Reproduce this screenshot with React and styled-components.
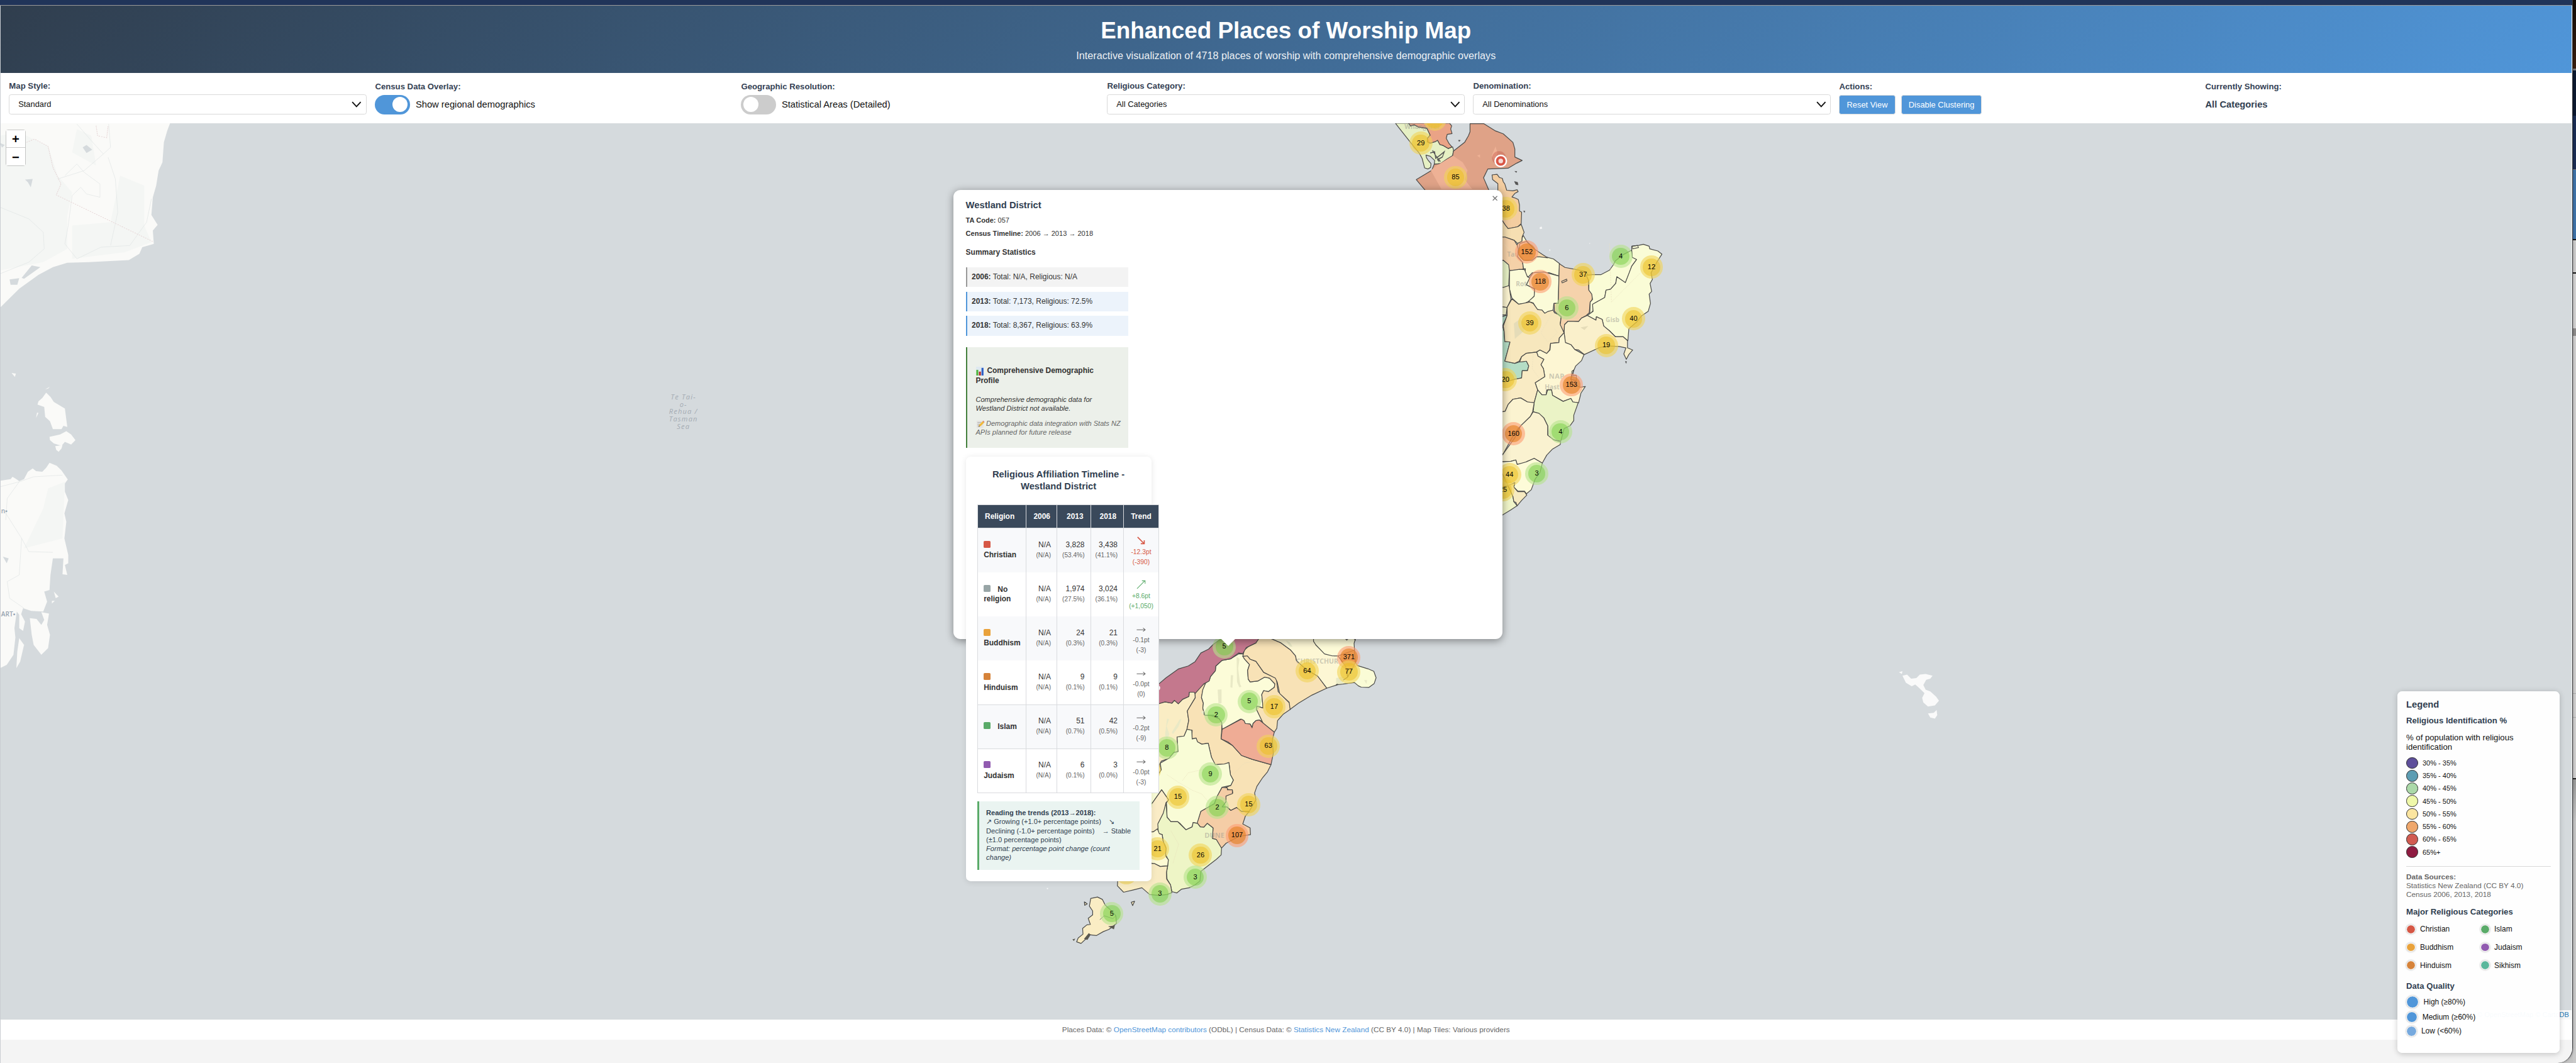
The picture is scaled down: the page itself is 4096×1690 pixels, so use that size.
import React from "react";
import styled, { createGlobalStyle, css } from "styled-components";

const Global = createGlobalStyle`
  html, body { margin: 0; padding: 0; overflow: hidden; background: #f4f4f4; }
  * { box-sizing: border-box; }
`;

const Screen = styled.div`
  zoom: 0.9217;
  width: 4444px;
  height: 1834px;
  display: flex;
  overflow: hidden;
  background: #c4c4c4;
  font-family: "Liberation Sans", Arial, Helvetica, sans-serif;
  color: #333;
`;
const Window = styled.div`
  position: relative;
  width: 4438px;
  height: 1834px;
  display: flex;
  flex-direction: column;
  flex: none;
  overflow: hidden;
  background: #f4f4f4;
  border-right: 2px solid #38393c;
  border-bottom-right-radius: 26px;
  box-shadow: 0 0 4px rgba(0, 0, 0, 0.4);
`;
const TabStrip = styled.div`
  height: 10px;
  flex: none;
  background: #203459;
  border-bottom: 2px solid #9b9a9a;
`;
const Page = styled.div`
  display: flex;
  flex-direction: column;
  flex: 1;
  border-left: 1px solid #c9cdd2;
  border-right: 2px solid #f3f5f6;
`;
const Behind = styled.div`
  width: 6px;
  flex: none;
  display: flex;
  flex-direction: column;
`;
const Slice = styled.div`
  height: ${(p) => p.$h}px;
  flex: none;
  background: ${(p) => p.$c};
`;

const Header = styled.header`
  height: 116px;
  flex: none;
  padding-top: 19px;
  text-align: center;
  background: linear-gradient(135deg, #303e4e 0%, #5096d9 100%);
  color: #fff;
`;
const Title = styled.h1`
  margin: 0 0 7.5px;
  font-size: 40px;
  line-height: 48px;
  font-weight: 700;
`;
const Subtitle = styled.p`
  margin: 0;
  font-size: 17.6px;
  line-height: 22px;
  opacity: 0.9;
`;

const Controls = styled.div`
  height: 87px;
  flex: none;
  display: grid;
  grid-template-columns: repeat(7, 1fr);
  gap: 15px;
  padding: 14px 15px 0 14.5px;
  background: #fff;
`;
const Control = styled.div`
  display: flex;
  flex-direction: column;
  gap: 4.5px;
  padding-top: ${(p) => (p.$drop ? 1 : 0)}px;
`;
const Label = styled.div`
  font-size: 14.3px;
  line-height: 18px;
  font-weight: 700;
  color: #344154;
`;
const Select = styled.div`
  display: flex;
  align-items: center;
  justify-content: space-between;
  height: 35px;
  padding: 0 7px 0 15px;
  border: 1px solid #d9d9d9;
  border-radius: 4px;
  font-size: 14px;
  color: #111;
`;
const Inline = styled.div`
  display: flex;
  align-items: center;
  gap: 10px;
  height: 34px;
  font-size: 16px;
  color: #111;
  font-weight: ${(p) => (p.$bold ? 700 : 400)};
  ${(p) => p.$bold && css`color: #303e50;`}
`;
const Toggle = styled.div`
  width: 60px;
  height: 34px;
  border-radius: 17px;
  padding: 4px;
  display: flex;
  justify-content: ${(p) => (p.$on ? "flex-end" : "flex-start")};
  background: ${(p) => (p.$on ? "#5096d9" : "#ccc")};
  &::after {
    content: "";
    width: 26px;
    height: 26px;
    border-radius: 50%;
    background: #fff;
  }
`;
const Button = styled.div`
  height: 34px;
  line-height: 32px;
  padding: 0 12px;
  border: 1px solid #dcdcdc;
  border-radius: 4px;
  background: #5096d9;
  color: #fff;
  font-size: 14px;
`;

const MapArea = styled.div`
  position: relative;
  height: 1546px;
  flex: none;
  overflow: hidden;
  background: #d5dadd;
`;
const MapDrawing = styled.svg`
  display: block;
  margin-left: -1px;
  width: 4434px;
  height: 1546px;
`;
const ZoomBox = styled.div`
  position: absolute;
  left: 9px;
  top: 10px;
  width: 34px;
  border: 2px solid rgba(0, 0, 0, 0.2);
  border-radius: 4px;
  background-clip: padding-box;
`;
const ZoomButton = styled.div`
  height: ${(p) => (p.$first ? 31 : 30)}px;
  padding-top: 3.5px;
  border-bottom: ${(p) => (p.$first ? "1px solid #ccc" : "0")};
  background: #fff;
  display: flex;
  align-items: center;
  justify-content: center;
  font-weight: 700;
  font-size: 22px;
  line-height: 26px;
  color: #000;
`;
const tones = {
  s: ["rgba(181,226,140,.6)", "rgba(110,204,57,.45)"],
  m: ["rgba(241,211,87,.6)", "rgba(236,190,30,.5)"],
  l: ["rgba(253,156,115,.6)", "rgba(226,126,30,.6)"],
};
const Cluster = styled.div`
  position: absolute;
  left: ${(p) => p.$x - 21}px;
  top: ${(p) => p.$y - 233}px;
  width: 40px;
  height: 40px;
  padding: 5px;
  border-radius: 50%;
  background: ${(p) => tones[p.$t][0]};
  span {
    display: block;
    height: 30px;
    border-radius: 50%;
    background: ${(p) => tones[p.$t][1]};
    text-align: center;
    font-size: 12px;
    line-height: 30px;
    color: #000;
  }
`;
const Attribution = styled.div`
  position: absolute;
  right: 0;
  bottom: 0;
  height: 17px;
  padding: 0 4px 0 5px;
  background: rgba(255, 255, 255, 0.8);
  font-size: 12px;
  line-height: 17px;
  white-space: nowrap;
  color: #2578b4;
`;

const Popup = styled.div`
  position: absolute;
  left: 1644px;
  top: 115px;
  width: 947px;
  height: 774px;
  padding: 15.5px 21px 0;
  border-radius: 12px;
  background: #fff;
  box-shadow: 0 3px 14px rgba(0, 0, 0, 0.4);
`;
const Tip = styled.svg`
  position: absolute;
  left: 461px;
  top: 773px;
  width: 26px;
  height: 13px;
`;
const Close = styled.svg`
  position: absolute;
  right: 8px;
  top: 9px;
  width: 9px;
  height: 9px;
`;
const Body = styled.div`
  width: 280px;
`;
const PopTitle = styled.div`
  font-size: 16px;
  line-height: 20px;
  font-weight: 700;
  color: #303e50;
  margin-bottom: 9px;
`;
const Fact = styled.div`
  font-size: 12px;
  line-height: 16px;
  margin-bottom: 6px;
`;
const Section = styled.div`
  font-size: 13px;
  line-height: 16px;
  font-weight: 700;
  margin: 17.5px 0 17px;
`;
const Years = styled.div`
  display: flex;
  flex-direction: column;
  gap: 8px;
`;
const Year = styled.div`
  height: 34px;
  padding-left: 8px;
  font-size: 13px;
  line-height: 33px;
  border-left: 3px solid ${(p) => (p.$on ? "#5096d9" : "#999")};
  background: ${(p) => (p.$on ? "#ecf3fb" : "#f3f3f3")};
`;
const Profile = styled.div`
  margin-top: 20px;
  height: 174px;
  padding: 32.5px 0 0 15px;
  border-left: 3px solid #43803c;
  background: #ecf0ea;
  white-space: nowrap;
`;
const ProfileTitle = styled.div`
  font-size: 13px;
  line-height: 17px;
  font-weight: 700;
  margin-bottom: 17.3px;
`;
const ProfileText = styled.div`
  font-size: 12px;
  line-height: 15px;
  font-style: italic;
  margin-bottom: 10.7px;
  color: ${(p) => (p.$dim ? "#666" : "#333")};
`;
const Emoji = styled.svg`
  display: inline-block;
  vertical-align: -3px;
  width: 16px;
  height: 16px;
  margin: -2px ${(p) => p.$gap}px -2px 0;
`;
const Timeline = styled.div`
  margin-top: 15px;
  width: 320px;
  height: 732px;
  padding: 20.5px 20px 20px;
  border-radius: 8px;
  background: #fff;
  box-shadow: 0 2px 10px rgba(0, 0, 0, 0.1);
`;
const TimelineTitle = styled.div`
  font-size: 16px;
  line-height: 21px;
  font-weight: 700;
  text-align: center;
  color: #303e50;
  margin-bottom: 19.5px;
`;
const Table = styled.div`
  display: grid;
  grid-template-columns: 83px 52px 57px 56px 59.4px;
  gap: 1px;
  width: 313.4px;
  padding: 1px;
  background: #d9dbde;
`;
const Head = styled.div`
  height: 40px;
  padding: 0 12px;
  line-height: 41px;
  font-size: 13px;
  font-weight: 700;
  color: #fff;
  background: #3a495b;
  text-align: ${(p) => p.$align};
  ${(p) => p.$align === "center" && css`padding: 0;`}
`;
const Cell = styled.div`
  height: 75px;
  background: ${(p) => (p.$alt ? "#f8f9fb" : "#fff")};
  text-align: right;
  padding: 20.5px 10px 0 0;
  font-size: 13px;
  line-height: 17px;
`;
const Small = styled.div`
  font-size: 11px;
  line-height: 17px;
  color: #666;
`;
const Faith = styled.div`
  height: 75px;
  background: ${(p) => (p.$alt ? "#f8f9fb" : "#fff")};
  display: flex;
  flex-direction: column;
  justify-content: center;
  padding: 1px 0 0 10px;
  font-size: 13px;
  line-height: 16.5px;
  font-weight: 700;
`;
const Swatch = styled.span`
  display: inline-block;
  width: 12px;
  height: 12px;
  margin-right: 12px;
  border-radius: 2px;
  background: ${(p) => p.$c};
`;
const Trend = styled.div`
  height: 75px;
  background: ${(p) => (p.$alt ? "#f8f9fb" : "#fff")};
  display: flex;
  flex-direction: column;
  align-items: center;
  padding-top: 12.5px;
  font-size: 11.2px;
  line-height: 17px;
  color: ${(p) => p.$c};
`;
const Arrow = styled.svg`
  width: 16px;
  height: 16px;
  margin-bottom: 3.5px;
  flex: none;
  fill: none;
  stroke: currentColor;
  stroke-width: ${(p) => p.$w};
`;
const Note = styled.div`
  margin-top: 14.5px;
  height: 118px;
  padding: 12px 0 0 12px;
  border-left: 4px solid #5aab69;
  background: #eaf4f1;
  font-size: 12px;
  line-height: 15.5px;
  color: #303e50;
  white-space: pre;
`;

const Legend = styled.aside`
  position: absolute;
  left: 4136px;
  top: 1192px;
  width: 280px;
  height: 624px;
  padding: 15px;
  border-radius: 8px;
  background: rgba(255, 255, 255, 0.97);
  box-shadow: 0 2px 10px rgba(0, 0, 0, 0.2);
  color: #111;
`;
const LegendTitle = styled.div`
  font-size: ${(p) => p.$size || 14.3}px;
  line-height: 18px;
  height: 18px;
  font-weight: 700;
  color: #303e50;
  margin-top: ${(p) => p.$mt || 0}px;
`;
const LegendNote = styled.div`
  margin-top: 13px;
  font-size: 14.3px;
  line-height: 16px;
`;
const Scale = styled.div`
  display: flex;
  flex-direction: column;
  gap: 4px;
  margin-top: 9.6px;
  padding-bottom: 15px;
  border-bottom: 1px solid #d8d8d8;
`;
const ScaleRow = styled.div`
  display: flex;
  align-items: center;
  gap: 8px;
  height: 18px;
  font-size: 12px;
  &::before {
    content: "";
    width: 18px;
    height: 18px;
    border-radius: 50%;
    border: 1px solid #333;
    background: ${(p) => p.$c};
  }
`;
const Sources = styled.div`
  margin-top: 9.8px;
  font-size: 12.8px;
  line-height: 15.4px;
  color: #666;
`;
const Faiths = styled.div`
  display: grid;
  grid-template-columns: 128px 1fr;
  grid-auto-rows: 31.1px;
  margin-top: 4.6px;
`;
const Item = styled.div`
  display: flex;
  align-items: center;
  gap: 8px;
  font-size: 13px;
  height: ${(p) => p.$h}px;
  margin-top: ${(p) => p.$mt || 0}px;
`;
const Dot = styled.span`
  width: ${(p) => p.$d}px;
  height: ${(p) => p.$d}px;
  border-radius: 50%;
  border: 2px solid #fff;
  background: ${(p) => p.$c};
  background-clip: padding-box;
  box-shadow: 0 0 3px rgba(0, 0, 0, 0.35);
`;

const Footer = styled.footer`
  height: 35px;
  flex: none;
  background: #fff;
  text-align: center;
  font-size: 12.8px;
  line-height: 35px;
  color: #666;
  b {
    font-weight: 400;
    color: #5096d9;
  }
`;

const clusters = [
  [2475, 206, "", "m"], [2451, 247, 29, "m"], [2511, 306, 85, "m"], [2598, 360, 38, "m"],
  [2634, 435, 152, "l"], [2657, 486, 118, "l"], [2731, 474, 37, "m"], [2796, 442, 4, "s"],
  [2849, 461, 12, "m"], [2703, 531, 6, "s"], [2639, 557, 39, "m"], [2818, 550, 40, "m"],
  [2771, 596, 19, "m"], [2597, 655, 20, "m"], [2711, 664, 153, "l"], [2611, 748, 160, "l"],
  [2692, 745, 4, "s"], [2593, 845, 25, "m"], [2604, 818.5, 44, "m"], [2651, 817, 3, "s"],
  [2112, 1115.5, 5, "s"], [2327, 1134, 371, "l"], [2327, 1159, 77, "m"], [2255, 1157, 64, "m"],
  [2155, 1210, 5, "s"], [2198, 1219, 17, "m"], [2098, 1233, 2, "s"], [2013, 1290, 8, "s"],
  [2188, 1287, 63, "m"], [2088, 1335, 9, "s"], [2032, 1375, 15, "m"], [2154, 1388, 15, "m"],
  [2100, 1393, 2, "s"], [2134, 1441, 107, "l"], [1997, 1464, 21, "m"], [2071, 1475, 26, "m"],
  [2062, 1513, 3, "s"], [2001, 1542, 3, "s"], [1918, 1576, 5, "s"], [1983, 1328, "", "m"],
  [1968, 1387, "", "s"], [1943, 1505, "", "m"],
];

const north = [
  ["#e6f0c4", "82,28 100,45 165,105 205,140 220,160 233,196 250,200 264,194 266,180 250,166 243,158 240,148 262,152 285,168 283,182 315,180 345,165 378,150 383,130 378,117 355,123 330,112 312,108 300,92 262,103 248,98 247,85 262,73 245,47 200,42 180,34 160,38 150,28"],
  ["#eaa386", "150,28 160,38 180,34 200,42 245,47 262,73 247,85 248,98 262,103 290,97 300,92 312,108 330,112 355,123 375,117 360,105 345,85 350,70 375,67 368,50 373,38 362,28"],
  ["#dfa287", "468,30 540,30 600,57 640,68 690,100 700,125 700,155 738,168 710,178 665,197 560,200 538,233 565,279 575,300 250,300 235,279 215,262 190,240 270,205 283,182 315,180 345,165 378,150 382,133 440,100 460,75 468,60"],
  ["#f3cda0", "582,222 608,220 620,232 635,235 640,248 648,256 658,280 690,282 712,278 717,285 700,292 685,305 705,310 718,315 724,335 724,358 735,362 733,405 715,417 665,424 650,412 636,395 612,360 612,255 585,240"],
  ["#f6dfb2", "733,408 748,438 738,455 737,472 715,480 697,468 650,456 610,456 610,395 636,395 652,412 665,424 715,417"],
  ["#f5d1a8", "610,456 650,456 697,468 712,486 720,500 715,530 740,550 745,575 725,580 672,582 665,560 640,543 610,543"],
  ["#fcfad4", "744,450 760,470 820,515 860,530 900,538 932,556 928,602 880,590 790,590 770,605 750,598 755,575 745,575 740,550 715,530 718,500 712,485 718,478 737,472 738,458"],
  ["#f6d8aa", "760,472 800,500 840,520 870,534 830,530 812,530 790,543 745,543 720,520 725,480"],
  ["#fbfbd8", "672,582 725,577 750,578 765,605 778,610 760,635 800,650 803,675 780,695 750,705 720,708 685,685 672,650"],
  ["#fbfbd8", "780,605 795,590 850,587 928,602 925,705 902,705 898,730 870,738 855,742 840,730 815,728 795,703 770,698 800,678 803,650 760,635"],
  ["#e8f2c6", "610,548 640,543 668,560 672,582 668,640 640,645 610,645"],
  ["#fbf3d0", "610,645 640,645 670,638 680,690 660,720 635,718 610,700"],
  ["#f6f6d0", "610,700 635,718 660,720 655,748 636,748 610,745"],
  ["#b5ddc5", "610,760 655,750 660,752 636,790 645,812 648,848 675,850 662,885 648,922 700,930 725,925 760,922 772,940 765,958 738,958 735,985 700,990 650,1000 610,1000"],
  ["#f7e7bd", "660,720 685,688 720,708 778,700 795,705 818,728 840,730 855,742 872,735 898,730 905,740 940,752 935,780 955,815 930,835 928,852 885,855 880,880 865,893 830,880 810,888 760,892 735,905 722,922 700,930 648,922 662,885 675,850 648,848 645,812 640,790 660,750"],
  ["#f5d2ab", "930,556 960,570 1020,578 1065,585 1080,600 1083,655 1100,670 1100,690 1090,700 1085,740 1070,750 1045,760 1030,773 975,772 957,785 955,815 935,785 940,755 905,735 903,705 925,705"],
  ["#fafcd6", "1070,600 1100,597 1145,597 1190,580 1210,560 1220,545 1265,520 1305,505 1310,530 1330,540 1305,565 1290,595 1272,627 1228,605 1222,630 1195,652 1172,655 1165,683 1105,708 1105,732 1088,745 1090,700 1102,690 1098,670 1083,655 1083,620"],
  ["#fafcd6", "1305,490 1340,487 1365,483 1395,490 1398,500 1440,508 1461,520 1435,550 1405,590 1412,615 1400,630 1408,660 1395,670 1402,705 1390,735 1355,752 1330,775 1290,800 1285,845 1260,830 1220,830 1190,808 1160,790 1152,765 1122,755 1120,768 1075,750 1105,735 1102,708 1165,683 1172,655 1195,652 1222,630 1228,605 1272,627 1305,565 1330,540 1308,532 1305,505"],
  ["#faf0cb", "1075,750 1120,768 1122,755 1152,765 1160,790 1190,808 1220,830 1260,830 1283,845 1283,872 1310,880 1290,897 1277,915 1264,895 1275,872 1240,867 1190,865 1140,870 1060,897 1030,880 1010,878 990,860 960,852 955,815 957,785 975,772 1030,773 1045,760"],
  ["#fdf6d3", "955,815 962,852 990,860 1010,878 1058,897 1045,920 1015,940 1000,965 990,990 1000,1010 1040,1020 1065,1017 1042,1042 1030,1078 1000,1075 990,1062 950,1073 895,1050 890,1030 865,1030 862,1048 840,1048 818,1030 805,1003 855,980 848,950 835,935 850,915 820,903 813,888 830,880 865,893 882,880 885,855 928,852 930,835"],
  ["#f9ebc4", "813,888 820,903 850,915 835,935 848,950 855,980 805,1003 818,1030 800,1078 765,1075 730,1060 690,1065 665,1085 650,1110 610,1115 610,1000 650,1000 700,990 735,985 738,958 765,958 772,940 760,922 725,925 735,905 760,892"],
  ["#ebf3c6", "818,1030 840,1048 862,1048 870,1030 890,1030 895,1050 950,1073 990,1062 1000,1075 1028,1078 1005,1125 1005,1145 985,1165 955,1175 938,1222 900,1217 872,1205 870,1165 850,1135 825,1120 795,1112 800,1078"],
  ["#fbf3d0", "610,1115 650,1110 665,1085 690,1065 730,1060 765,1075 800,1078 792,1112 780,1130 730,1165 700,1190 640,1270 610,1270"],
  ["#faf2d0", "795,1112 825,1118 850,1135 870,1165 870,1200 900,1217 937,1225 935,1235 895,1252 865,1275 842,1305 800,1287 765,1298 740,1308 712,1310 705,1293 680,1298 640,1300 610,1298 640,1270 700,1210 730,1165 780,1130"],
  ["#fdfbd8", "610,1298 640,1300 680,1298 705,1293 712,1310 760,1300 800,1287 842,1305 830,1340 805,1365 785,1405 760,1420 750,1410 715,1410 695,1395 700,1378 665,1390 636,1345 610,1330"],
  ["#f0f5c8", "610,1400 665,1390 690,1430 695,1450 712,1465 680,1480 636,1500 610,1505"],
  ["#f6eac0", "665,1390 700,1378 695,1395 715,1412 750,1412 762,1425 735,1445 712,1465 705,1452 695,1450 690,1430"],
];

const south = [
  ["#faedc4", "40,403 90,393 125,400 138,385 158,403 180,380 213,365 215,343 245,343 246,372 235,390 205,440 212,490 203,535 188,570 152,575 157,650 135,655 110,685 70,700 60,720 70,745 40,790"],
  ["#f8e2b6", "245,350 275,310 300,295 285,335 278,370 288,400 285,425 293,460 330,465 370,480 385,500 383,535 380,585 440,620 485,670 540,690 638,718 620,755 595,785 565,830 553,865 560,900 525,960 485,960 460,940 430,955 410,937 385,937 405,910 405,880 440,865 438,850 412,845 405,835 430,825 443,798 428,770 420,707 400,715 345,718 330,680 313,607 280,612 255,600 250,580 228,585 230,540 203,535 212,490 205,440 235,390 246,372"],
  ["#fcfcd8", "300,295 318,282 325,262 350,232 352,208 385,178 430,170 470,145 492,145 500,170 527,200 517,230 520,275 530,290 570,285 605,265 630,270 658,300 655,318 625,340 600,335 590,355 597,425 565,415 562,430 595,495 578,487 560,490 545,505 542,525 530,508 505,505 498,490 480,482 385,535 383,500 370,480 340,462 295,462 285,425 288,400 278,370 285,330"],
  ["#f8e2b6", "492,157 515,153 530,172 560,183 600,240 665,270 675,340 735,400 738,432 700,458 672,490 668,530 655,550 600,510 562,430 565,415 597,425 590,355 600,335 625,340 655,318 658,300 630,270 605,265 570,285 530,290 520,275 517,230 527,200 500,170"],
  ["#f8e2b6", "575,40 640,66 690,88 740,125 765,155 770,180 820,225 880,260 927,322 850,358 780,400 737,432 732,395 683,350 670,290 660,270 600,240 560,183 530,172 515,155 492,157 500,125 520,108 560,88"],
  ["#c4788d", "40,310 60,298 95,268 160,222 210,207 245,185 275,140 315,120 340,95 380,66 400,40 590,40 575,66 560,88 510,112 492,143 470,140 430,170 385,178 352,208 350,232 325,262 318,285 290,300 245,350 240,343 215,343 213,365 180,380 158,403 138,385 125,400 90,393 57,403 40,403"],
  ["#fdf7d4", "640,66 640,40 858,40 858,66 870,98 920,145 965,155 985,155 1025,210 1035,265 980,305 927,322 880,260 820,225 770,180 765,155 740,125 690,88"],
  ["#fdfbd8", "858,40 1080,40 1075,66 1068,90 1070,125 1040,145 985,155 955,155 915,145 870,98 858,80"],
  ["#f8e2b6", "985,155 1070,125 1075,190 1035,265 1025,210"],
  ["#fafcd6", "1035,265 975,305 1070,293 1090,310 1105,317 1145,318 1172,298 1182,268 1170,235 1140,222 1085,205 1075,190"],
  ["#efac95", "385,535 485,482 498,490 505,505 530,508 540,527 545,505 560,490 578,487 600,505 655,550 645,590 650,660 638,718 540,690 485,670 440,620 415,600 380,585"],
  ["#f9fcd6", "203,535 228,540 230,585 250,580 258,600 280,612 313,607 330,680 350,718 395,715 420,707 428,770 443,798 430,825 385,835 358,885 345,920 275,960 258,1022 235,1017 230,1040 198,1055 165,1020 155,1013 120,1013 100,990 97,915 108,900 72,848 25,915 0,960 0,800 40,790 70,745 65,710 110,685 135,655 157,650 152,575 188,570"],
  ["#faecc6", "72,848 108,900 95,915 85,965 55,1020 55,1050 30,1065 0,1065 0,940 25,915"],
  ["#f5cda6", "385,835 412,838 412,848 438,848 438,868 405,880 405,910 385,937 410,937 430,955 460,940 485,960 525,960 505,985 492,1025 530,1045 532,1080 470,1090 405,1125 382,1150 360,1128 352,1105 335,1100 338,1045 308,1022 290,1042 272,1040 256,1020 275,960 345,920 360,880"],
  ["#eef5c6", "95,915 100,990 120,1013 155,1013 198,1055 230,1040 235,1017 258,1022 272,1040 290,1042 308,1022 338,1045 335,1100 355,1105 382,1150 380,1185 355,1208 320,1235 275,1270 270,1320 245,1340 215,1355 175,1362 150,1382 125,1375 118,1340 100,1310 97,1275 103,1245 105,1210 92,1180 75,1080 55,1075 52,1025 80,970"],
  ["#fdfad4", "0,1068 30,1065 50,1050 60,1075 75,1080 78,1110 95,1150 92,1190 107,1210 103,1242 65,1245 35,1230 0,1225"],
  ["#f8ebc2", "-155,1225 -155,1310 -157,1345 -125,1378 -78,1367 -30,1355 10,1390 60,1395 100,1390 125,1380 118,1340 98,1310 97,1275 103,1242 65,1245 35,1230"],
  ["#faedc4", "-295,1410 -260,1403 -235,1415 -220,1445 -190,1472 -165,1500 -162,1540 -200,1570 -230,1582 -265,1602 -300,1598 -315,1615 -345,1643 -368,1635 -360,1615 -335,1595 -337,1565 -315,1547 -297,1545 -308,1513 -285,1495 -285,1475 -302,1450"],
  ["#faedc4", "-328,1428 -313,1438 -326,1446"],
  ["#faedc4", "-85,1430 -68,1425 -78,1447"],
];

const australia = [
  "0,22 354,22 348,45 341,80 338,140 330,165 325,210 318,245 315,298 328,328 318,345 320,385 296,395 290,415 268,434 185,440 140,442 110,455 80,478 40,520 0,577",
  "96,832 105,845 112,860 135,880 140,935 132,932 128,942 110,942 104,918 94,905 92,875 78,868 80,858 88,848",
  "75,908 80,893 77,892",
  "103,965 125,958 138,948 148,958 157,975 148,988 135,980 128,992 112,985 104,975",
  "115,993 130,990 128,1000 122,1010 117,1004",
  "24,773 33,775 31,785",
  "94,822 104,814 100,820",
  "0,1097 22,1092 26,1085 32,1090 40,1098 50,1092 58,1070 68,1060 75,1068 88,1070 96,1058 103,1043 118,1052 128,1066 141,1093 135,1105 135,1130 142,1155 134,1195 138,1220 134,1270 142,1320 142,1345 135,1350 140,1380 130,1378 132,1330 110,1330 105,1380 103,1425 92,1430 98,1460 90,1490 65,1488 48,1480 44,1498 52,1520 48,1548 40,1540 40,1500 35,1490 30,1540 32,1568 28,1620 14,1650 0,1660",
  "86,1492 102,1496 98,1530 104,1560 100,1600 86,1620 70,1590 66,1560 62,1510 76,1512 86,1530 92,1515",
  "40,1570 50,1590 42,1640 34,1660 36,1610",
  "112,1430 122,1445 116,1450",
  "108,1458 114,1458 108,1466",
];

const Shapes = ({ list }) =>
  list.map(([fill, points], i) => (
    <polygon key={i} points={points} fill={fill} stroke="#4a4a48" strokeWidth="1.3" strokeLinejoin="round" vectorEffect="non-scaling-stroke" />
  ));

const NewZealand = () => (
  <MapDrawing viewBox="0 213 4434 1546">
    <g transform="translate(0 200) scale(.82908 .57398)">
      {australia.map((p, i) => <polygon key={i} points={p} fill="#fafaf8" />)}
      <path d="M0,60 L40,50 100,90 120,180 150,230 140,300 140,400 90,440 0,465Z M150,110 L200,150 190,60 160,40Z M250,180 L300,210 300,330 315,380 260,410 150,430 150,330 230,320Z M100,1120 L135,1100 130,1270 50,1300 90,1180Z" fill="#f4f6f4" />
      <g fill="none" stroke="#dfe3e3" strokeWidth="1" vectorEffect="non-scaling-stroke">
        <path d="M160,25 L190,75 215,115 230,95 226,25 M215,115 L175,165 120,190 M225,125 L240,190 245,290 230,390 M0,275 L60,310 90,350 92,400 60,440 0,475 M150,240 L142,330 135,385 160,430 210,395 270,390 305,320 315,250 M135,180 L160,145 175,170 208,205 208,245 180,235 168,215 150,240" />
        <path d="M0,1115 L40,1100 70,1085 130,1080 M10,1190 L45,1270 60,1310 110,1312 M45,1270 L40,1380 15,1400 20,1450 50,1480 M40,1100 L15,1150 12,1215" />
      </g>
      <path d="M55,80 L72,70 100,92 110,155 127,205 117,238 318,378 M200,30 L203,60 222,66 225,30" fill="none" stroke="#e3cfd0" strokeWidth="1.4" strokeDasharray="3 2.4" />
      <path d="M172,95 L180,88 192,102 180,112Z M52,192 L68,190 64,215 58,200Z M20,492 L40,488 36,508 22,508Z M66,450 L84,455 50,490 45,487Z M6,1325 L18,1330 14,1345Z M0,82 L10,88 4,96Z" fill="#d5dadd" />
    </g>
    <g transform="translate(2380 200) scale(.33333 .45918)">
      <Shapes list={north} />
      <path d="M265,205 L300,185 380,150 430,175 455,205 440,240 480,276 320,276Z M580,150 L600,115 610,140 595,170Z M505,150 L520,145 520,158Z" fill="#eeb195" />
      <path d="M262,140 L285,135 290,160 310,150 335,135 325,155 300,165 308,172 M274,130 L290,150 315,172" fill="none" stroke="#555" strokeWidth="4" />
      <path d="M695,780 L725,765 760,780 745,810 700,838Z M1040,795 L1080,790 1060,805Z" fill="#e5dcb8" />
      <path d="M942,622 L968,614 970,620 945,628Z M990,990 L995,960 1005,955 1000,975 1018,975 1018,995Z M1308,490 L1335,487 1340,495 1310,500Z" fill="none" stroke="#4a4a48" strokeWidth="3" />
      <path d="M408,92 L418,92 412,97Z M700,209 L710,209 708,213Z M698,247 L714,250 717,260 705,258Z M745,358 L752,358 750,363Z M1272,923 L1278,923 1276,930Z" fill="#555" stroke="#555" strokeWidth="2" />
      <path d="M828,420 L838,416 842,424 830,426Z M876,503 L884,502 882,509Z M1085,478 L1091,479 1087,482Z" fill="#f7f8f8" />
      <path d="M905,800 L920,815 870,850 835,815 890,745 M795,895 L790,950 830,990 825,1025 M640,480 L700,520 M1190,480 L1200,700 1350,590" fill="none" stroke="#e9dfbd" strokeWidth="2" strokeDasharray="5 4" />
    </g>
    <g transform="translate(1980 1080) scale(.33333)">
      <Shapes list={south} />
      <g fill="#e9e9c6">
        <path d="M460,160 L475,170 468,220 478,300 485,315 474,318 462,290Z M362,330 L382,328 382,400 366,402Z M430,255 L442,255 438,320 428,318Z M275,445 L290,440 290,460Z" />
        <path d="M100,480 L110,482 98,520 112,560 95,600 90,560Z M165,485 L175,480 160,520 130,560 125,550Z" />
        <path d="M715,75 L735,85 750,108 735,106Z M975,270 L1015,262 1010,300 975,300Z M1120,280 L1135,280 1132,300Z" />
      </g>
      <path d="M440,770 L500,710 560,700 M100,770 L160,810 230,850 280,870 330,930 M180,800 L210,760 300,740 M120,1060 L160,1130 130,1230 M230,1180 L290,1230" fill="none" stroke="#e6dcb8" strokeWidth="2" strokeDasharray="5 3" />
      <path d="M1020,66 L1030,76 1040,66Z M1065,66 L1075,78 1078,66Z M-390,1622 L-375,1618 -382,1630Z M-384,1594 L-380,1583Z M-330,1620 L-305,1590 -295,1598 -312,1625Z M-205,1555 L-170,1550 -175,1570Z" fill="#5a5850" />
      <path d="M-248,1520 L-225,1500 -180,1515 -165,1500" fill="none" stroke="#666" strokeWidth="3" />
    </g>
    <circle cx="1997" cy="1187" r="4.5" fill="#fff" />
    <g fill="#fafafa">
      <path d="M3282,1166 L3290,1164 3297,1171 3306,1170 3312,1164 3322,1163 3334,1166 3330,1171 3323,1173 3318,1182 3322,1190 3330,1193 3340,1202 3345,1209 3338,1217 3326,1219 3318,1212 3316,1204 3320,1196 3312,1188 3304,1181 3298,1184 3288,1178Z" />
      <path d="M3326,1231 L3336,1230 3341,1225 3342,1234 3338,1240 3330,1238Z M3276,1160 L3282,1158 3281,1163Z M1806,1532 h2 v2 h-2Z" />
    </g>
    <g fontFamily="'Open Sans', 'Noto Sans', sans-serif" fill="#9a9a90" fillOpacity=".5" fontWeight="700" fontSize="12">
      <text x="2423" y="222.5" fontSize="11">Whangarei</text>
      <text x="2600" y="443" fontSize="11">Tau</text>
      <text x="2615" y="494.5" fontSize="11">Rot</text>
      <text x="2770" y="556" fontSize="11">Gisb</text>
      <text x="2672" y="654" letterSpacing=".5">NAP</text>
      <text x="2665" y="672" fontSize="11">Hast</text>
      <text x="2236" y="1145" fontSize="11.5">CHRISTCHUR</text>
      <text x="2078" y="1445">DUNE</text>
    </g>
    <g fontFamily="'Open Sans', 'Noto Sans', sans-serif" fill="#98a4b0" fontSize="11" fontWeight="600">
      <text x="2" y="886">n▪</text>
      <text x="2" y="1064">ART▪</text>
    </g>
    <g fontFamily="'Open Sans', 'Noto Sans', sans-serif" fontStyle="italic" fill="#a4abb3" fontSize="12" textAnchor="middle" letterSpacing="1.3">
      <text x="1179" y="689">Te Tai-</text>
      <text x="1179" y="702">o-</text>
      <text x="1179" y="714">Rehua /</text>
      <text x="1179" y="727">Tasman</text>
      <text x="1179" y="740">Sea</text>
    </g>
    <circle cx="2586" cy="273" r="12" fill="rgba(190,60,50,.3)" />
    <circle cx="2589" cy="278" r="11" fill="#fff" />
    <circle cx="2589" cy="278" r="8.3" fill="#d95545" />
    <circle cx="2589" cy="278" r="4" fill="#f6dcd8" />
  </MapDrawing>
);

const Dropdown = ({ label, value }) => (
  <Control>
    <Label>{label}</Label>
    <Select>
      {value}
      <svg width="17" height="11" viewBox="0 0 17 11" fill="none" stroke="#111" strokeWidth="2">
        <path d="M1.2 1.2 L8.5 9.2 L15.8 1.2" />
      </svg>
    </Select>
  </Control>
);

const rows = [
  ["Christian", "#d65745", "3,828", "53.4%", "3,438", "41.1%", "-12.3pt", "(-390)", "down"],
  ["No religion", "#98a5a6", "1,974", "27.5%", "3,024", "36.1%", "+8.6pt", "(+1,050)", "up"],
  ["Buddhism", "#e9a23b", "24", "0.3%", "21", "0.3%", "-0.1pt", "(-3)", "flat"],
  ["Hinduism", "#d6833a", "9", "0.1%", "9", "0.1%", "-0.0pt", "(0)", "flat"],
  ["Islam", "#5aab69", "51", "0.7%", "42", "0.5%", "-0.2pt", "(-9)", "flat"],
  ["Judaism", "#915bb0", "6", "0.1%", "3", "0.0%", "-0.0pt", "(-3)", "flat"],
];
const trendColor = { down: "#d65745", up: "#5aab69", flat: "#666" };
const trendPath = {
  down: "M2 2 L13 13 M13.5 7.5 V13.5 H7.5",
  up: "M1 15 L15 1 M9.5 1.5 H15 V6.5",
  flat: "M0.5 10 H15 M11.5 7 L15.2 10 L11.5 13",
};

const FaithName = ({ row, alt }) => {
  const [name, color] = row;
  const words = name.split(" ");
  const inline = name === "Islam" || words.length > 1;
  return (
    <Faith $alt={alt}>
      <div><Swatch $c={color} />{inline && words[0]}</div>
      {!inline && <div>{name}</div>}
      {words[1] && <div>{words[1]}</div>}
    </Faith>
  );
};

const TrendTable = () => (
  <Table>
    <Head $align="left">Religion</Head>
    <Head $align="right">2006</Head>
    <Head $align="right">2013</Head>
    <Head $align="right">2018</Head>
    <Head $align="center">Trend</Head>
    {rows.map((r, i) => {
      const alt = i % 2 === 0;
      return (
        <React.Fragment key={r[0]}>
          <FaithName row={r} alt={alt} />
          <Cell $alt={alt}>N/A<Small>(N/A)</Small></Cell>
          <Cell $alt={alt}>{r[2]}<Small>({r[3]})</Small></Cell>
          <Cell $alt={alt}>{r[4]}<Small>({r[5]})</Small></Cell>
          <Trend $alt={alt} $c={trendColor[r[8]]}>
            <Arrow viewBox="0 0 16 16" $w={r[8] === "down" ? 1.8 : 1.1}><path d={trendPath[r[8]]} /></Arrow>
            <div>{r[6]}</div>
            <div>{r[7]}</div>
          </Trend>
        </React.Fragment>
      );
    })}
  </Table>
);

const scale = [
  ["30% - 35%", "#5e4f9b"], ["35% - 40%", "#5d9db3"], ["40% - 45%", "#abd9a9"], ["45% - 50%", "#eff8a9"],
  ["50% - 55%", "#fbe5a0"], ["55% - 60%", "#efa76c"], ["60% - 65%", "#d15b51"], ["65%+", "#8f1b41"],
];
const faiths = [
  ["Christian", "#d65745"], ["Islam", "#5aab69"], ["Buddhism", "#e9a23b"],
  ["Judaism", "#915bb0"], ["Hinduism", "#d6833a"], ["Sikhism", "#5ab79c"],
];

export default function App() {
  return (
    <>
      <Global />
      <Screen>
        <Window>
          <TabStrip />
          <Page>
            <Header>
              <Title>Enhanced Places of Worship Map</Title>
              <Subtitle>Interactive visualization of 4718 places of worship with comprehensive demographic overlays</Subtitle>
            </Header>
            <Controls>
              <Dropdown label="Map Style:" value="Standard" />
              <Control $drop>
                <Label>Census Data Overlay:</Label>
                <Inline><Toggle $on />Show regional demographics</Inline>
              </Control>
              <Control $drop>
                <Label>Geographic Resolution:</Label>
                <Inline><Toggle />Statistical Areas (Detailed)</Inline>
              </Control>
              <Dropdown label="Religious Category:" value="All Categories" />
              <Dropdown label="Denomination:" value="All Denominations" />
              <Control $drop>
                <Label>Actions:</Label>
                <Inline><Button>Reset View</Button><Button>Disable Clustering</Button></Inline>
              </Control>
              <Control $drop>
                <Label>Currently Showing:</Label>
                <Inline $bold>All Categories</Inline>
              </Control>
            </Controls>
            <MapArea>
              <NewZealand />
              {clusters.map(([x, y, n, t]) => (
                <Cluster key={x + "-" + y} $x={x} $y={y} $t={t}><span>{n}</span></Cluster>
              ))}
              <ZoomBox>
                <ZoomButton $first>+</ZoomButton>
                <ZoomButton>−</ZoomButton>
              </ZoomBox>
              <Attribution>Leaflet | © OpenStreetMap © CartoDB</Attribution>
              <Popup>
                <Tip viewBox="0 0 26 13"><path d="M0 0 H26 L13 13Z" fill="#fff" /></Tip>
                <Close viewBox="0 0 9 9"><path d="M.7 .7 L8.3 8.3 M8.3 .7 L.7 8.3" stroke="#757575" strokeWidth="1.5" /></Close>
                <Body>
                  <PopTitle>Westland District</PopTitle>
                  <Fact><b>TA Code:</b> 057</Fact>
                  <Fact><b>Census Timeline:</b> 2006 → 2013 → 2018</Fact>
                  <Section>Summary Statistics</Section>
                  <Years>
                    <Year><b>2006:</b> Total: N/A, Religious: N/A</Year>
                    <Year $on><b>2013:</b> Total: 7,173, Religious: 72.5%</Year>
                    <Year $on><b>2018:</b> Total: 8,367, Religious: 63.9%</Year>
                  </Years>
                  <Profile>
                    <ProfileTitle>
                      <Emoji viewBox="0 0 16 16" $gap={3.5}>
                        <rect x="1" width="13.5" height="16" fill="#dfe8f0" />
                        <rect x="1.5" y="5.5" width="3.4" height="10" fill="#4fb53c" />
                        <rect x="6" y="8.5" width="3.4" height="7" fill="#b3302c" />
                        <rect x="10.5" y="2" width="3.4" height="13.5" fill="#2c5fc4" />
                      </Emoji>
                      Comprehensive Demographic<br />Profile
                    </ProfileTitle>
                    <ProfileText>Comprehensive demographic data for<br />Westland District not available.</ProfileText>
                    <ProfileText $dim>
                      <Emoji viewBox="0 0 16 16" $gap={2}>
                        <path d="M2 2 H14 V15 H2Z" fill="#e4e4e2" />
                        <path d="M3.5 5 H10 M3.5 8 H8 M3.5 11 H6" stroke="#aaa" strokeWidth="1" />
                        <path d="M5.5 12.5 L6.5 9 L12.5 3 L15 5.5 L9 11.5Z" fill="#efb93c" />
                        <path d="M12.5 3 L13.6 2 L15.8 4.4 L15 5.5Z" fill="#d9776a" />
                        <path d="M5.5 12.5 L6.2 10.4 L7.6 11.8Z" fill="#333" />
                      </Emoji>
                      Demographic data integration with Stats NZ<br />APIs planned for future release
                    </ProfileText>
                  </Profile>
                </Body>
                <Timeline>
                  <TimelineTitle>Religious Affiliation Timeline -<br />Westland District</TimelineTitle>
                  <TrendTable />
                  <Note>
                    <b>Reading the trends (2013→2018):</b>{"\n"}
                    {"↗ Growing (+1.0+ percentage points)    ↘\n"}
                    {"Declining (-1.0+ percentage points)    → Stable\n"}
                    {"(±1.0 percentage points)\n"}
                    <i>{"Format: percentage point change (count\nchange)"}</i>
                  </Note>
                </Timeline>
              </Popup>
            </MapArea>
            <Footer>
              Places Data: © <b>OpenStreetMap contributors</b> (ODbL) | Census Data: © <b>Statistics New Zealand</b> (CC BY 4.0) | Map Tiles: Various providers
            </Footer>
          </Page>
          <Legend>
            <LegendTitle $size={16}>Legend</LegendTitle>
            <LegendTitle $mt={9.5}>Religious Identification %</LegendTitle>
            <LegendNote>% of population with religious<br />identification</LegendNote>
            <Scale>
              {scale.map(([t, c]) => <ScaleRow key={t} $c={c}>{t}</ScaleRow>)}
            </Scale>
            <Sources><b>Data Sources:</b><br />Statistics New Zealand (CC BY 4.0)<br />Census 2006, 2013, 2018</Sources>
            <LegendTitle $mt={14}>Major Religious Categories</LegendTitle>
            <Faiths>
              {faiths.map(([t, c]) => <Item key={t} $h={31}><Dot $d={16} $c={c} />{t}</Item>)}
            </Faiths>
            <LegendTitle $mt={11.5}>Data Quality</LegendTitle>
            <Item $h={28} $mt={4.4}><Dot $d={22} $c="#5096d9" />High (≥80%)</Item>
            <Item $h={24}><Dot $d={20} $c="#5096d9" />Medium (≥60%)</Item>
            <Item $h={24}><Dot $d={18} $c="#76a9de" />Low (&lt;60%)</Item>
          </Legend>
        </Window>
        <Behind>
          <Slice $h={118} $c="linear-gradient(#120c08, #3a1f10)" />
          <Slice $h={3} $c="#777" />
          <Slice $h={79} $c="#0d1930" />
          <Slice $h={92} $c="#1b2d54" />
          <Slice $h={1} $c="#777" />
          <Slice $h={119} $c="#3f72a8" />
          <Slice $h={2} $c="#111" />
          <Slice $h={56} $c="#cccbcb" />
          <Slice $h={2} $c="#111" />
          <Slice $h={94} $c="#d2d1d1" />
          <Slice $h={14} $c="#8d8b8b" />
          <Slice $h={616} $c="#cfcece" />
          <Slice $h={1} $c="#aaa" />
          <Slice $h={40} $c="#cfcece" />
          <Slice $h={1} $c="#aaa" />
          <Slice $h={104} $c="#cfcece" />
          <Slice $h={2} $c="#222" />
          <Slice $h={490} $c="linear-gradient(#999, #c4c4c4 15%, #c9c9c9)" />
        </Behind>
      </Screen>
    </>
  );
}
